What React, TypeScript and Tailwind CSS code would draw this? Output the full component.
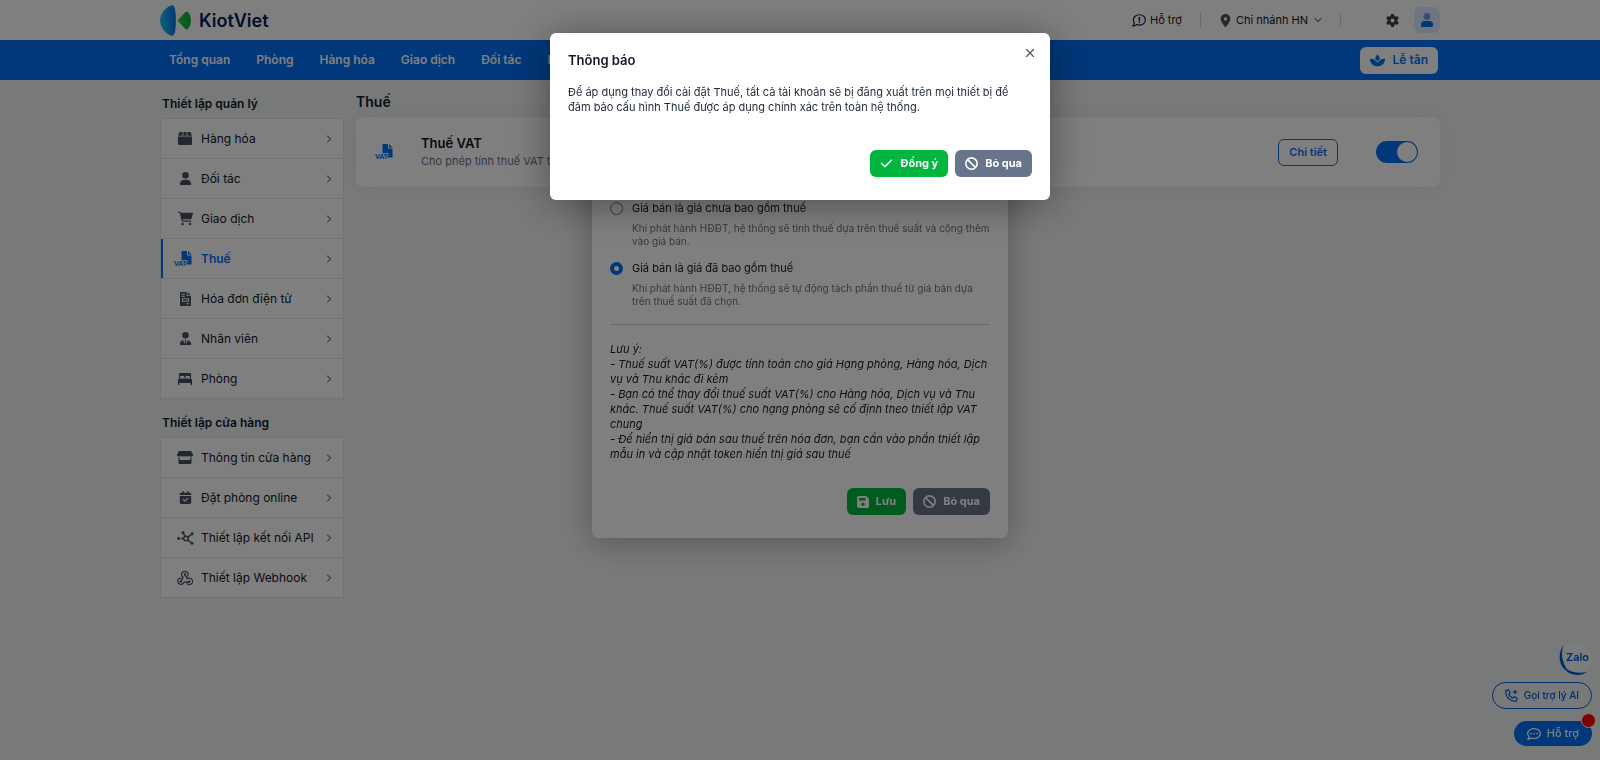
import type { ReactNode } from "react";
import {
  FaBan,
  FaCalendarCheck,
  FaCartShopping,
  FaCheck,
  FaGear,
  FaLocationDot,
  FaRegCommentDots,
  FaSpa,
  FaUser,
  FaUserTie,
} from "react-icons/fa6";
import { ChevronDown, ChevronRight, X } from "lucide-react";

type MenuItem = {
  label: string;
  icon: ReactNode;
  active?: boolean;
};

function VatIcon() {
  return (
    <svg viewBox="0 0 18 16" className="h-4 w-[18px]" fill="currentColor">
      <path d="M7.500 0h5.500v4.500h4.500v9H7.500z" />
      <path d="M14 0l3.500 3.500H14z" />
      <text
        x="0"
        y="15"
        fontSize="6.500"
        fontWeight="700"
        fontFamily="Inter, sans-serif"
        stroke="#fff"
        strokeWidth="1.600"
        paintOrder="stroke"
      >
        VAT
      </text>
    </svg>
  );
}

function BoxIcon() {
  return (
    <svg viewBox="0 0 14 13" className="h-[13px] w-3.5" fill="currentColor">
      <path d="M2 0h2.900l-.5 3.700H0L1.200.6Q1.400 0 2 0zM5.700 0h2.600l.5 3.700H5.200zM9.100 0H12q.6 0 .8.6L14 3.700H9.600z" />
      <path d="M0 4.600h14v7.200q0 1.200-1.200 1.200H1.200Q0 13 0 11.800z" />
    </svg>
  );
}

function InvoiceIcon() {
  return (
    <svg viewBox="0 0 11 14" className="h-3.5 w-[11px]" fill="currentColor">
      <path
        fillRule="evenodd"
        d="M0 0h6.600v4H11v10H0zM1.500 1.800v1h3.300v-1zM1.500 3.800v1h3.300v-1zM2 6.300v3.400h7V6.300zM3 7.200h5v1.500H3zM6.300 11.200v1h3v-1z"
      />
      <path d="M7.500 0L11 3.200H7.500z" />
    </svg>
  );
}

function BedIcon() {
  return (
    <svg viewBox="0 0 14 12" className="h-3 w-3.5" fill="currentColor">
      <path
        fillRule="evenodd"
        d="M2 0h10q1 0 1 1v4H11.900V3.600q0-.6-.6-.6H8.200q-.6 0-.6.6V5H6.400V3.600q0-.6-.6-.6H2.700q-.6 0-.6.6V5H1V1q0-1 1-1z"
      />
      <path d="M1.200 5.600h11.600Q14 5.600 14 6.800V12h-1.400v-2H1.400v2H0V6.800q0-1.200 1.200-1.200z" />
    </svg>
  );
}

function StoreIcon() {
  return (
    <svg viewBox="0 0 16 13" className="h-[13px] w-4" fill="currentColor">
      <path d="M2.500 0h11q.5 0 .8.500l1.500 2.600q.7 1.600-.7 2.400-1.200.5-2.300-.6-1.200 1.300-2.500 0-1.200 1.300-2.400 0-1.200 1.300-2.400 0-1.100 1.300-2.400 0-1.100 1.100-2.300.5Q-.5 4.700.2 3.100L1.700.5Q2 0 2.500 0z" />
      <path d="M1.500 6.500h1.300V9h10.400V6.500h1.300v5.300q0 1.200-1.200 1.200H2.700q-1.200 0-1.200-1.200z" />
    </svg>
  );
}

function ApiIcon() {
  return (
    <svg viewBox="0 0 17 14" className="h-3.5 w-[17px]" fill="none" stroke="currentColor" strokeWidth="1.400">
      <circle cx="9" cy="7.500" r="2.300" />
      <path d="M6.800 7.500H4M8 5.400L6.400 2.200M10.900 6.200l3.800-3M10.700 9.100l3.800 2.700" />
      <g fill="currentColor" stroke="none">
        <circle cx="1.600" cy="7.500" r="1.500" />
        <circle cx="6" cy="1.600" r="1.500" />
        <circle cx="15.200" cy="2.800" r="1.500" />
        <circle cx="15" cy="12.200" r="1.500" />
      </g>
    </svg>
  );
}

function WebhookIcon() {
  return (
    <svg
      viewBox="0 0 16 14"
      className="h-3.5 w-4"
      fill="none"
      stroke="currentColor"
      strokeLinecap="round"
      strokeLinejoin="round"
    >
      <path
        strokeWidth="1.200"
        d="M10.800 5A3.300 3.300 0 104.900 5.200L6.200 6.300 4.300 9.600M3.800 7A3.200 3.200 0 107 11.200h4.500M9.200 5.400l1.400 2.300A3.200 3.200 0 1110 12.600"
      />
      <path strokeWidth="1" d="M7.900 3.600l2.100 3.700" />
      <g fill="currentColor" stroke="none">
        <circle cx="7.900" cy="3.500" r="1.200" />
        <circle cx="3.900" cy="10.500" r="1.200" />
        <circle cx="12.100" cy="10.700" r="1.200" />
      </g>
    </svg>
  );
}

function SaveIcon() {
  return (
    <svg viewBox="0 0 12 12" className="size-3" fill="currentColor">
      <path
        fillRule="evenodd"
        d="M1.500 0h7.700L12 2.800v7.700q0 1.500-1.500 1.500h-9Q0 12 0 10.500v-9Q0 0 1.500 0zM2 2v2.600h6.500V2zM6 6.400a1.800 1.800 0 100 3.600 1.800 1.800 0 000-3.600z"
      />
    </svg>
  );
}

function SupportIcon() {
  return (
    <svg viewBox="0 0 14 13" className="h-[13px] w-3.5" fill="none" stroke="currentColor" strokeWidth="1.100">
      <path d="M7.400.7c3.400 0 6 2.300 6 5.200s-2.600 5.200-6 5.200c-1 0-1.900-.2-2.700-.5-1 .8-2.300 1.400-3.900 1.400.8-.8 1.400-1.800 1.500-2.900C1.600 8.200 1.400 7 1.400 5.900 1.400 3 4 .7 7.400.7z" />
      <path d="M7.400 2.900v3.800M7.400 7.500V9" strokeWidth="1.400" />
    </svg>
  );
}

function AvatarIcon() {
  return (
    <svg viewBox="0 0 12 14" className="h-3.5 w-3" fill="#0070f4">
      <circle cx="6" cy="3.500" r="3.400" opacity=".6" />
      <path d="M3.500 8h5Q12 8 12 11.500v1.300q0 1.200-1.200 1.200H1.200Q0 14 0 12.800v-1.300Q0 8 3.500 8z" />
    </svg>
  );
}

function CallIcon() {
  return (
    <svg viewBox="0 0 13 13" className="size-[13px]" fill="none" stroke="currentColor" strokeWidth="1.200" strokeLinejoin="round">
      <path d="M1 1.600L3.300.9q.5-.1.700.4l1 2.300q.2.500-.2.800l-1 .9q1.200 2.600 3.800 3.800l.9-1q.3-.4.800-.2l2.300 1q.5.200.4.700l-.7 2.300q-.2.500-.7.500Q6 12.200 3.300 9.400.6 6.600.6 2.200q0-.4.400-.6z" />
      <path d="M10 .2l.8 2 2 .8-2 .8-.8 2-.8-2-2-.8 2-.8z" fill="currentColor" stroke="none" />
    </svg>
  );
}

function Logo() {
  return (
    <a href="#" className="flex items-center gap-2">
      <svg viewBox="0 0 31 31" className="size-[31px]">
        <defs>
          <linearGradient id="logoBlue" x1="0" x2="1">
            <stop offset="0" stopColor="#1fc8f4" />
            <stop offset="1" stopColor="#0a6cf0" />
          </linearGradient>
          <linearGradient id="logoGreen" x1="0" x2="1">
            <stop offset="0" stopColor="#1fd04a" />
            <stop offset="1" stopColor="#10a838" />
          </linearGradient>
        </defs>
        <path
          fill="url(#logoBlue)"
          d="M12.500.2C15 1 15.800 6.500 15.800 15.500S15 30 12.500 30.800C9.500 31 0 25 0 15.500S9.500 0 12.500.2z"
        />
        <path
          fill="url(#logoGreen)"
          d="M18.500 14.200l6.700-7q1.400-1.200 2.700-.2 3 3.500 3 8.500t-3 8.500q-1.300 1-2.700-.2l-6.700-7q-1.100-1.300 0-2.600z"
        />
      </svg>
      <span className="text-[18px] font-semibold text-[#051a5c]">KiotViet</span>
    </a>
  );
}

const navItems = ["Tổng quan", "Phòng", "Hàng hóa", "Giao dịch", "Đối tác", "Nhân viên"];

const manageItems: MenuItem[] = [
  { label: "Hàng hóa", icon: <BoxIcon /> },
  { label: "Đối tác", icon: <FaUser className="size-[13px]" /> },
  { label: "Giao dịch", icon: <FaCartShopping className="size-[15px]" /> },
  { label: "Thuế", icon: <VatIcon />, active: true },
  { label: "Hóa đơn điện tử", icon: <InvoiceIcon /> },
  { label: "Nhân viên", icon: <FaUserTie className="size-[13px]" /> },
  { label: "Phòng", icon: <BedIcon /> },
];

const storeItems: MenuItem[] = [
  { label: "Thông tin cửa hàng", icon: <StoreIcon /> },
  { label: "Đặt phòng online", icon: <FaCalendarCheck className="size-[13px]" /> },
  { label: "Thiết lập kết nối API", icon: <ApiIcon /> },
  { label: "Thiết lập Webhook", icon: <WebhookIcon /> },
];

const priceOptions = [
  {
    id: "excluded",
    label: "Giá bán là giá chưa bao gồm thuế",
    hint: "Khi phát hành HĐĐT, hệ thống sẽ tính thuế dựa trên thuế suất và cộng thêm vào giá bán.",
  },
  {
    id: "included",
    label: "Giá bán là giá đã bao gồm thuế",
    hint: "Khi phát hành HĐĐT, hệ thống sẽ tự động tách phần thuế từ giá bán dựa trên thuế suất đã chọn.",
  },
];

function SideMenu({ title, items }: { title: string; items: MenuItem[] }) {
  return (
    <section>
      <h2 className="flex h-7 items-center px-0.5 text-[12px] font-semibold">{title}</h2>
      <ul className="border border-b-0 border-[#e2e6e8] bg-white">
        {items.map((item) => (
          <li key={item.label} className="border-b border-[#e2e6e8]">
            <a
              href="#"
              className={
                item.active
                  ? "flex h-[39px] items-center border-l-2 border-[#0070f4] pr-2 font-semibold text-[#0070f4]"
                  : "flex h-[39px] items-center border-l-2 border-transparent pr-2"
              }
            >
              <span
                className={
                  item.active
                    ? "flex w-[38px] justify-end pr-[9px]"
                    : "flex w-[38px] justify-center pl-1.5 text-[#475060]"
                }
              >
                {item.icon}
              </span>
              <span className="flex-1 text-[12px]">{item.label}</span>
              <ChevronRight className="size-3 text-[#1f2937]" />
            </a>
          </li>
        ))}
      </ul>
    </section>
  );
}

function ActionButton({
  icon,
  label,
  primary,
}: {
  icon: ReactNode;
  label: string;
  primary?: boolean;
}) {
  return (
    <button
      type="button"
      className={
        primary
          ? "flex h-[27px] items-center gap-[7px] rounded-md bg-[#00b63e] px-2.5 text-[11px] font-bold text-white"
          : "flex h-[27px] items-center gap-[7px] rounded-md bg-[#677489] px-2.5 text-[11px] font-bold text-white"
      }
    >
      {icon}
      {label}
    </button>
  );
}

function Header() {
  return (
    <header>
      <div className="bg-white">
        <div className="mx-auto flex h-10 w-4/5 items-center justify-between">
          <Logo />
          <div className="flex items-center text-[11px]">
            <a href="#" className="flex items-center gap-1">
              <SupportIcon />
              Hỗ trợ
            </a>
            <span className="ml-[18px] h-3.5 w-px bg-gray-300" />
            <button type="button" className="ml-[18px] flex items-center gap-1">
              <FaLocationDot className="size-[13px] text-[#4b5563]" />
              Chi nhánh HN
              <ChevronDown className="size-3" />
            </button>
            <span className="ml-4 h-3.5 w-px bg-gray-300" />
            <button type="button" aria-label="Thiết lập" className="ml-[45px]">
              <FaGear className="size-[13px] text-[#374151]" />
            </button>
            <button
              type="button"
              aria-label="Tài khoản"
              className="ml-[15px] flex size-[26px] items-center justify-center rounded-md bg-[#e0edff]"
            >
              <AvatarIcon />
            </button>
          </div>
        </div>
      </div>
      <div className="bg-[#0070f4]">
        <div className="mx-auto flex h-10 w-4/5 items-center justify-between pr-0.5 pl-[9px]">
          <nav className="flex gap-[26px] text-[12px] font-semibold text-white">
            {navItems.map((item) => (
              <a key={item} href="#">
                {item}
              </a>
            ))}
          </nav>
          <button
            type="button"
            className="flex h-[27px] items-center gap-2 rounded-md bg-white px-2.5 text-[12px] font-semibold text-[#0070f4]"
          >
            <FaSpa className="size-[15px]" />
            Lễ tân
          </button>
        </div>
      </div>
    </header>
  );
}

function TaxSettings() {
  return (
    <main className="min-w-0 flex-1">
      <h1 className="flex h-8 items-center text-[14px] font-semibold">Thuế</h1>
      <div className="flex h-[70px] items-center rounded-md bg-white pr-[22px] pl-[19px] shadow-[0_0_24px_rgba(30,40,60,0.06)]">
        <span className="w-[46px] text-[#0070f4]">
          <VatIcon />
        </span>
        <div className="flex-1">
          <h2 className="text-[13px] leading-[18px] font-semibold">Thuế VAT</h2>
          <p className="text-[11px] leading-[18px] text-[#6b7280]">Cho phép tính thuế VAT trên</p>
        </div>
        <button
          type="button"
          className="mr-[38px] h-[27px] rounded-md border border-[#0070f4] px-2.5 text-[11px] font-semibold text-[#0070f4]"
        >
          Chi tiết
        </button>
        <input
          type="checkbox"
          defaultChecked
          aria-label="Thuế VAT"
          className="flex h-[22px] w-[42px] appearance-none items-center rounded-full bg-[#0070f4] p-px before:ml-auto before:size-5 before:rounded-full before:bg-white"
        />
      </div>
    </main>
  );
}

function TaxDialog() {
  return (
    <div className="fixed top-[120px] left-1/2 w-[416px] -translate-x-1/2 rounded-md bg-white px-[18px] pt-[81px] pb-[23px] shadow-[0_4px_32px_rgba(0,0,0,0.3)]">
      {priceOptions.map((option) => (
        <div key={option.id} className="mb-[13px]">
          <label className="flex h-[15px] items-center gap-[9px] text-[11px]">
            <input
              type="radio"
              name="price"
              defaultChecked={option.id === "included"}
              className="size-[13px] appearance-none rounded-full border border-gray-500 bg-white checked:border-4 checked:border-[#0070f4]"
            />
            {option.label}
          </label>
          <p className="mt-1.5 pl-[22px] text-[10px] leading-[13px] text-[#6b7280]">{option.hint}</p>
        </div>
      ))}
      <hr className="mt-4 border-[#cfd4da]" />
      <div className="mt-[17px] text-[11px] leading-[15px] italic">
        <p>Lưu ý:</p>
        <p>- Thuế suất VAT(%) được tính toán cho giá Hạng phòng, Hàng hóa, Dịch vụ và Thu khác đi kèm</p>
        <p>
          - Bạn có thể thay đổi thuế suất VAT(%) cho Hàng hóa, Dịch vụ và Thu khác. Thuế suất VAT(%) cho
          hạng phòng sẽ cố định theo thiết lập VAT chung
        </p>
        <p>
          - Để hiển thị giá bán sau thuế trên hóa đơn, bạn cần vào phần thiết lập mẫu in và cập nhật token
          hiển thị giá sau thuế
        </p>
      </div>
      <div className="mt-[26px] flex justify-end gap-[7px]">
        <ActionButton primary icon={<SaveIcon />} label="Lưu" />
        <ActionButton icon={<FaBan className="size-[13px]" />} label="Bỏ qua" />
      </div>
    </div>
  );
}

function FloatingActions() {
  return (
    <div className="fixed right-2 bottom-3.5 flex flex-col items-end text-[#0058d8]">
      <a href="#" aria-label="Zalo" className="mb-1.5">
        <svg viewBox="0 0 34 34" className="size-[34px]">
          <circle cx="18" cy="16" r="16" fill="#f6f8f8" />
          <path d="M6 2C1 9-1 20 7 28l1.500-1.500C3 18 3 9 6 2z" fill="currentColor" />
          <path d="M7 27.500c6 7 16 6.500 22 2.500-7 1.500-15 1-21-3.500z" fill="currentColor" />
          <text
            x="8"
            y="19"
            fontSize="11"
            fontWeight="600"
            fontFamily="Inter, sans-serif"
            fill="currentColor"
          >
            Zalo
          </text>
        </svg>
      </a>
      <button
        type="button"
        className="mb-3 flex h-[27px] items-center gap-1.5 rounded-full border border-[#0058d8] px-3 text-[10px] font-medium"
      >
        <CallIcon />
        Gọi trợ lý AI
      </button>
      <button
        type="button"
        className="relative flex h-[25px] items-center gap-1.5 rounded-full bg-[#0070f4] px-[13px] text-[11px] font-medium text-white"
      >
        <FaRegCommentDots className="size-3.5" />
        Hỗ trợ
        <span className="absolute -top-2 -right-1 size-[15px] rounded-full border border-white bg-[#f00]" />
      </button>
    </div>
  );
}

function ConfirmDialog() {
  return (
    <div
      role="dialog"
      aria-labelledby="confirm-title"
      className="fixed top-[33px] left-1/2 w-[500px] -translate-x-1/2 rounded-md bg-white px-[18px] pt-[18px] pb-[23px] shadow-[0_4px_40px_rgba(0,0,0,0.4)]"
    >
      <button type="button" aria-label="Đóng" className="absolute top-[13px] right-[13px] text-[#4b5563]">
        <X className="size-3.5" />
      </button>
      <h2 id="confirm-title" className="text-[13px] leading-[18px] font-semibold">
        Thông báo
      </h2>
      <p className="mt-4 text-[11px] leading-[15px] text-[#1f2937]">
        Để áp dụng thay đổi cài đặt Thuế, tất cả tài khoản sẽ bị đăng xuất trên mọi thiết bị để đảm bảo cấu
        hình Thuế được áp dụng chính xác trên toàn hệ thống.
      </p>
      <div className="mt-[35px] flex justify-end gap-[7px]">
        <ActionButton primary icon={<FaCheck className="size-[13px]" />} label="Đồng ý" />
        <ActionButton icon={<FaBan className="size-[13px]" />} label="Bỏ qua" />
      </div>
    </div>
  );
}

export default function App() {
  return (
    <div className="min-h-screen bg-[#f1f4f3] font-['Inter',sans-serif] text-[#111827]">
      <Header />
      <div className="mx-auto flex w-4/5 gap-3 pt-[5px]">
        <aside className="flex w-[184px] shrink-0 flex-col gap-2.5 pt-[5px]">
          <SideMenu title="Thiết lập quản lý" items={manageItems} />
          <SideMenu title="Thiết lập cửa hàng" items={storeItems} />
        </aside>
        <TaxSettings />
      </div>
      <TaxDialog />
      <FloatingActions />
      <div className="fixed inset-0 bg-black/50" />
      <ConfirmDialog />
    </div>
  );
}
